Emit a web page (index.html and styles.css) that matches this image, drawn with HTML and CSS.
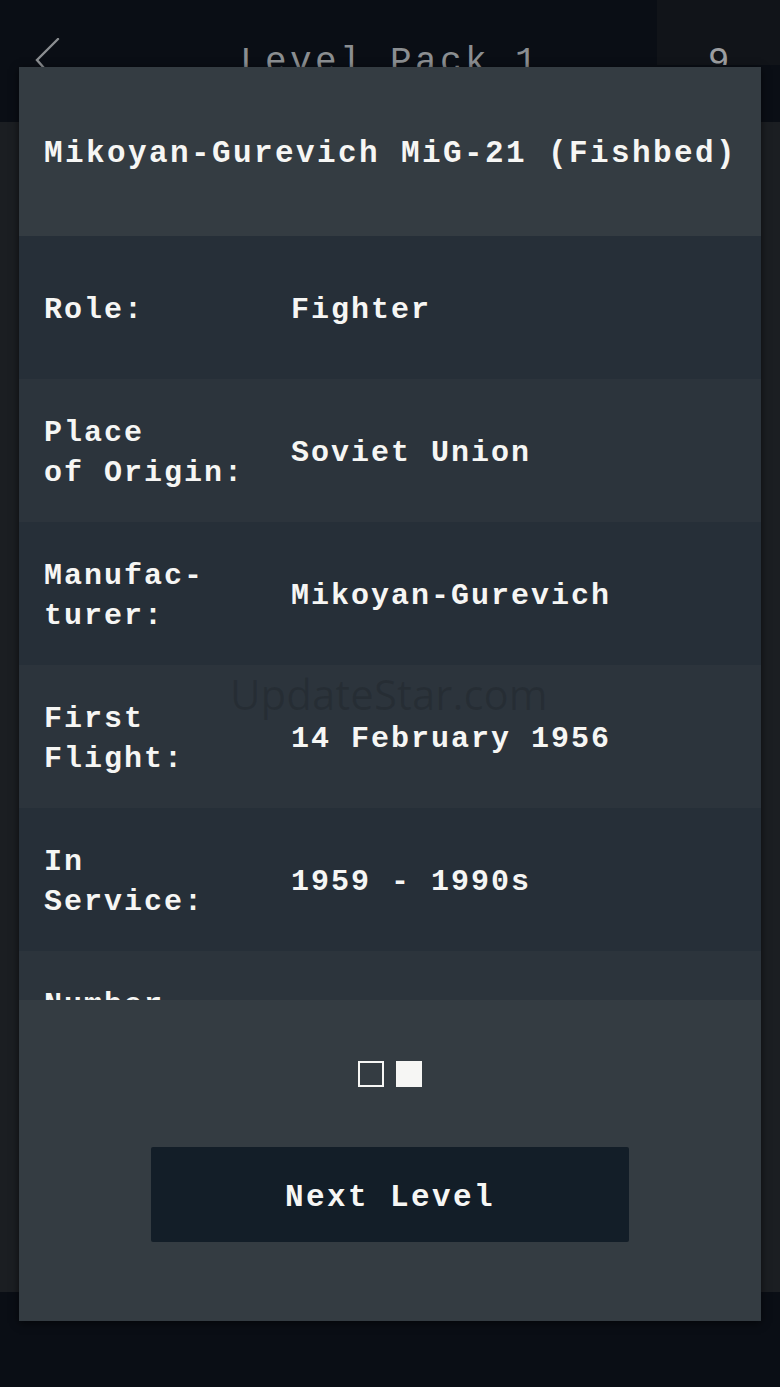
FILE: index.html
```html
<!DOCTYPE html>
<html lang="en">
<head>
<meta charset="utf-8">
<title>Level Pack 1</title>
<link rel="stylesheet" href="styles.css">
</head>
<body>
  <div class="screen">
    <header class="topbar">
      <div class="back">
        <svg class="chevron" width="30" height="40" viewBox="0 0 30 40" aria-hidden="true">
          <polyline points="23,1 2,22 9,30" fill="none" stroke="#8b8e91" stroke-width="2.4" stroke-linecap="round" stroke-linejoin="miter"/>
        </svg>
      </div>
      <div class="pack-title">Level Pack 1</div>
      <div class="score">9</div>
    </header>
    <main class="stage"></main>
    <footer class="bottombar"></footer>
  </div>

  <section class="modal">
    <h1 class="modal-title">Mikoyan-Gurevich MiG-21 (Fishbed)</h1>
    <div class="facts">
      <div class="row dark">
        <div class="label">Role:</div>
        <div class="value">Fighter</div>
      </div>
      <div class="row light">
        <div class="label">Place<br>of Origin:</div>
        <div class="value">Soviet Union</div>
      </div>
      <div class="row dark">
        <div class="label">Manufac-<br>turer:</div>
        <div class="value">Mikoyan-Gurevich</div>
      </div>
      <div class="row light">
        <div class="label">First<br>Flight:</div>
        <div class="value">14 February 1956</div>
      </div>
      <div class="row dark">
        <div class="label">In<br>Service:</div>
        <div class="value">1959 - 1990s</div>
      </div>
      <div class="row light">
        <div class="label">Number<br>Built:</div>
        <div class="value">11,496</div>
      </div>
    </div>
    <div class="modal-footer">
      <div class="pager">
        <span class="dot"></span>
        <span class="dot active"></span>
      </div>
      <button class="next-btn" type="button">Next Level</button>
    </div>
  </section>

  <div class="watermark">UpdateStar.com</div>
</body>
</html>
```

FILE: styles.css
```css
* {
  box-sizing: border-box;
}

html, body {
  margin: 0;
  padding: 0;
}

body {
  width: 780px;
  height: 1387px;
  overflow: hidden;
  background: #0a0e15;
  font-family: "Liberation Mono", "DejaVu Sans Mono", monospace;
  position: relative;
}

.screen {
  display: flex;
  flex-direction: column;
  height: 1387px;
}

.topbar {
  height: 122px;
  flex: none;
  background: #0a0e15;
  display: grid;
  grid-template-columns: 123px 1fr 123px;
  align-items: start;
}

.back {
  padding: 38px 0 0 35px;
}

.chevron {
  display: block;
}

.pack-title {
  padding-top: 45px;
  text-align: center;
  font-size: 36px;
  line-height: 36px;
  letter-spacing: 3.4px;
  color: #8b8e91;
  white-space: nowrap;
}

.score {
  height: 65px;
  background: #111419;
  padding-top: 45px;
  text-align: center;
  font-size: 36px;
  line-height: 36px;
  color: #9c9ea0;
  overflow: hidden;
}

.stage {
  flex: 1;
  background: #1b1e22;
}

.bottombar {
  height: 95px;
  flex: none;
  background: #0a0e15;
}

.modal {
  position: absolute;
  left: 19px;
  top: 67px;
  width: 742px;
  height: 1254px;
  background: #343c42;
  display: flex;
  flex-direction: column;
  box-shadow: 0 2px 8px rgba(0, 0, 0, 0.6);
  color: #f6f6f4;
  font-weight: bold;
}

.modal-title {
  margin: 0;
  height: 169px;
  flex: none;
  display: flex;
  align-items: center;
  padding: 4px 0 0 25px;
  font-size: 31px;
  line-height: 40px;
  letter-spacing: 2.4px;
  font-weight: bold;
  white-space: nowrap;
}

.facts {
  height: 764px;
  flex: none;
  overflow: hidden;
}

.row {
  height: 143px;
  display: grid;
  grid-template-columns: 247px 1fr;
  align-items: center;
  padding: 4px 0 0 25px;
  font-size: 30px;
  line-height: 40px;
  letter-spacing: 2px;
}

.row.dark {
  background: #262f38;
}

.row.light {
  background: #2c343c;
}

.label,
.value {
  white-space: nowrap;
}

.modal-footer {
  flex: 1;
  display: flex;
  flex-direction: column;
  align-items: center;
  padding-top: 61px;
  gap: 60px;
}

.pager {
  display: flex;
  gap: 12px;
}

.dot {
  width: 26px;
  height: 26px;
  border: 2px solid #f6f6f4;
  background: transparent;
}

.dot.active {
  background: #f6f6f4;
}

.next-btn {
  width: 478px;
  height: 95px;
  border: none;
  border-radius: 2px;
  background: #131e28;
  color: #f6f6f4;
  font-family: "Liberation Mono", "DejaVu Sans Mono", monospace;
  font-weight: bold;
  font-size: 31px;
  line-height: 40px;
  letter-spacing: 2.4px;
  padding: 7px 0 0 0;
}

.watermark {
  position: absolute;
  left: 230px;
  top: 673px;
  font-family: "Open Sans", sans-serif;
  font-size: 42px;
  line-height: 42px;
  color: rgba(0, 0, 0, 0.12);
  pointer-events: none;
  white-space: nowrap;
}
```
